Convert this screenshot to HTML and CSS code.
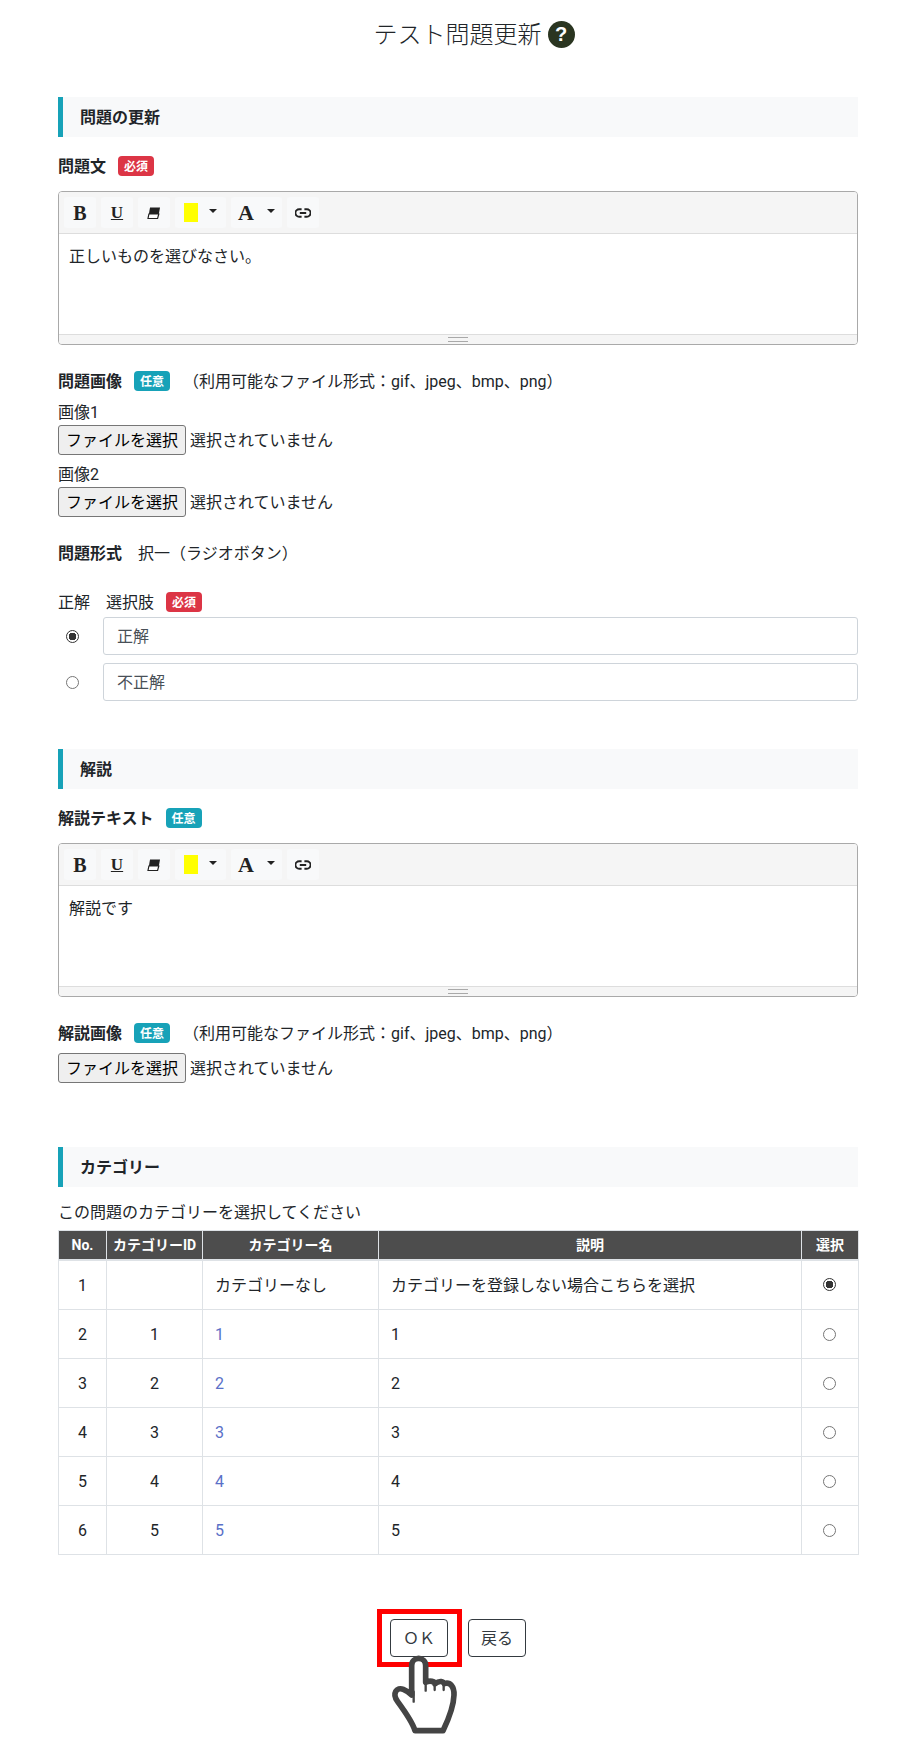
FILE: index.html
```html
<!DOCTYPE html>
<html lang="ja">
<head>
<meta charset="utf-8">
<title>テスト問題更新</title>
<link rel="stylesheet" href="styles.css">
</head>
<body>
<main class="page">
  <header class="title-row">
    <h1 class="title">テスト問題更新</h1>
    <span class="help">?</span>
  </header>

  <h2 class="section">問題の更新</h2>
  <div class="label-row after-section"><b class="label">問題文</b><span class="badge required">必須</span></div>
  <div class="editor">
    <div class="toolbar">
      <span class="tool serif">B</span>
      <span class="tool serif under">U</span>
      <span class="tool"><svg width="14" height="14" viewBox="0 0 14 14"><path d="M3 1.5H13L11.8 8H1.9Z" fill="#222"/><path d="M1.9 8H11.8L10.6 12.5H1Z" fill="#fff" stroke="#222" stroke-width="1.2"/></svg></span>
      <span class="tool wide"><i class="swatch"></i><i class="caret"></i></span>
      <span class="tool wide"><span class="serif big">A</span><i class="caret"></i></span>
      <span class="tool"><svg width="16" height="10" viewBox="0 0 16 10"><path d="M6.6 1.2H4.2a3.8 3.8 0 0 0 0 7.6h2.4M9.4 1.2h2.4a3.8 3.8 0 0 1 0 7.6H9.4M4.8 5h6.4" fill="none" stroke="#222" stroke-width="1.9"/></svg></span>
    </div>
    <div class="editable">正しいものを選びなさい。</div>
    <div class="status"><i class="grip"></i></div>
  </div>

  <div class="label-row after-editor"><b class="label">問題画像</b><span class="badge optional">任意</span><span class="note">（利用可能なファイル形式：gif、jpeg、bmp、png）</span></div>
  <div class="sub-label">画像1</div>
  <div class="file"><button class="file-btn" type="button">ファイルを選択</button><span>選択されていません</span></div>
  <div class="sub-label">画像2</div>
  <div class="file"><button class="file-btn" type="button">ファイルを選択</button><span>選択されていません</span></div>

  <div class="label-row after-editor"><b class="label">問題形式</b><span class="format">択一（ラジオボタン）</span></div>

  <div class="label-row choices-head"><span class="correct-head">正解</span><span>選択肢</span><span class="badge required">必須</span></div>
  <div class="choice first"><input class="radio" type="radio" name="q" checked><input class="text" type="text" value="正解"></div>
  <div class="choice"><input class="radio" type="radio" name="q"><input class="text" type="text" value="不正解"></div>

  <h2 class="section second">解説</h2>
  <div class="label-row after-section"><b class="label">解説テキスト</b><span class="badge optional">任意</span></div>
  <div class="editor">
    <div class="toolbar">
      <span class="tool serif">B</span>
      <span class="tool serif under">U</span>
      <span class="tool"><svg width="14" height="14" viewBox="0 0 14 14"><path d="M3 1.5H13L11.8 8H1.9Z" fill="#222"/><path d="M1.9 8H11.8L10.6 12.5H1Z" fill="#fff" stroke="#222" stroke-width="1.2"/></svg></span>
      <span class="tool wide"><i class="swatch"></i><i class="caret"></i></span>
      <span class="tool wide"><span class="serif big">A</span><i class="caret"></i></span>
      <span class="tool"><svg width="16" height="10" viewBox="0 0 16 10"><path d="M6.6 1.2H4.2a3.8 3.8 0 0 0 0 7.6h2.4M9.4 1.2h2.4a3.8 3.8 0 0 1 0 7.6H9.4M4.8 5h6.4" fill="none" stroke="#222" stroke-width="1.9"/></svg></span>
    </div>
    <div class="editable">解説です</div>
    <div class="status"><i class="grip"></i></div>
  </div>
  <div class="label-row after-editor"><b class="label">解説画像</b><span class="badge optional">任意</span><span class="note">（利用可能なファイル形式：gif、jpeg、bmp、png）</span></div>
  <div class="file after-note"><button class="file-btn" type="button">ファイルを選択</button><span>選択されていません</span></div>

  <h2 class="section third">カテゴリー</h2>
  <p class="lead">この問題のカテゴリーを選択してください</p>
  <table class="cats">
    <colgroup><col class="c1"><col class="c2"><col class="c3"><col class="c4"><col class="c5"></colgroup>
    <thead><tr><th>No.</th><th>カテゴリーID</th><th>カテゴリー名</th><th>説明</th><th>選択</th></tr></thead>
    <tbody>
      <tr><td class="mid">1</td><td class="mid"></td><td>カテゴリーなし</td><td>カテゴリーを登録しない場合こちらを選択</td><td class="pick"><input class="radio" type="radio" name="c" checked></td></tr>
      <tr><td class="mid">2</td><td class="mid">1</td><td><a href="#">1</a></td><td>1</td><td class="pick"><input class="radio" type="radio" name="c"></td></tr>
      <tr><td class="mid">3</td><td class="mid">2</td><td><a href="#">2</a></td><td>2</td><td class="pick"><input class="radio" type="radio" name="c"></td></tr>
      <tr><td class="mid">4</td><td class="mid">3</td><td><a href="#">3</a></td><td>3</td><td class="pick"><input class="radio" type="radio" name="c"></td></tr>
      <tr><td class="mid">5</td><td class="mid">4</td><td><a href="#">4</a></td><td>4</td><td class="pick"><input class="radio" type="radio" name="c"></td></tr>
      <tr><td class="mid">6</td><td class="mid">5</td><td><a href="#">5</a></td><td>5</td><td class="pick"><input class="radio" type="radio" name="c"></td></tr>
    </tbody>
  </table>

  <div class="actions">
    <div class="ok-wrap">
      <button class="btn ok" type="button">ＯＫ</button>
      <span class="highlight"></span>
      <svg class="hand" width="80" height="87" viewBox="0 0 240 261"><path d="M80 135V47C80 18 122 18 122 47V97C135 90 150 95 150 101C165 90 175 95 178 101C195 95 208 110 207 135C206 165 192 205 174 242H90C85 225 60 185 38 155C20 130 35 110 55 118C65 122 75 130 80 135Z" fill="#fff" stroke="#444" stroke-width="17" stroke-linejoin="round"/><path d="M86 125V155M122 97V122M149 103V120M176 103V120" fill="none" stroke="#444" stroke-width="7" stroke-linecap="round"/></svg>
    </div>
    <button class="btn" type="button">戻る</button>
  </div>
</main>
</body>
</html>
```

FILE: styles.css
```css
* { box-sizing: border-box; }
html, body { margin: 0; padding: 0; }
body {
  background: #fff;
  color: #212529;
  font-family: Roboto, "Noto Sans CJK JP", sans-serif;
  font-size: 16px;
  line-height: 24px;
}
.page { width: 800px; margin-left: 58px; padding-bottom: 80px; }

.title-row { display: flex; justify-content: center; align-items: center; gap: 6px; height: 97px; padding: 16px 0 45px 32px; }
.title { margin: 0; padding-top: 2px; font-size: 24px; font-weight: 300; line-height: 36px; }
.help { width: 27px; height: 27px; border-radius: 50%; background: #2a3520; color: #fff; font: bold 20px/27px "Liberation Sans", sans-serif; text-align: center; }

.section { margin: 0; height: 40px; padding-left: 17px; border-left: 5px solid #17a2b8; background: #f8f9fa; font-size: 16px; font-weight: 700; line-height: 42px; }
.section.second { margin-top: 48px; }
.section.third { margin-top: 64px; }

.label-row { display: flex; align-items: center; height: 24px; }
.label-row > :not(.badge) { padding-top: 2px; }
.label { font-weight: 700; font-size: 16px; }
.after-section { margin-top: 17px; }
.after-editor { margin-top: 24px; }
.badge { margin-left: 12px; width: 36px; height: 20px; padding-top: 1px; border-radius: 4px; color: #fff; font-size: 12px; font-weight: 700; line-height: 20px; text-align: center; }
.required { background: #dc3545; }
.optional { background: #17a2b8; }
.note { margin-left: 13px; }
.format { margin-left: 16px; }

.editor { margin-top: 13px; height: 154px; display: flex; flex-direction: column; border: 1px solid #a9a9a9; border-radius: 4px; overflow: hidden; }
.toolbar { display: flex; gap: 5px; height: 42px; padding: 5px; background: #f5f5f5; border-bottom: 1px solid #ddd; }
.tool { width: 32px; height: 31px; display: flex; align-items: center; justify-content: center; background: #f8f9fa; border-radius: 3px; color: #222; }
.tool.wide { width: 51px; justify-content: flex-start; padding-left: 9px; }
.serif { font-family: "Liberation Serif", serif; font-weight: 700; font-size: 20px; }
.under { text-decoration: underline; font-size: 17px; }
.big { font-size: 22px; width: 20px; margin-left: -2px; }
.swatch { display: block; width: 14px; height: 19px; background: #ff0; }
.caret { display: block; margin-left: 11px; width: 0; height: 0; margin-top: -3px; border: 4px solid transparent; border-top-color: #222; border-bottom: 0; }
.big + .caret { margin-left: 9px; }
.editable { flex: 1; padding: 11px 10px 9px; }
.status { height: 10px; display: flex; align-items: center; justify-content: center; background: #f5f5f5; border-top: 1px solid #ddd; }
.grip { display: block; width: 20px; height: 5px; border-top: 1px solid #a9a9a9; border-bottom: 1px solid #a9a9a9; }

.sub-label { margin-top: 7px; height: 24px; padding-top: 1px; }
.file { display: flex; align-items: center; gap: 4px; margin-top: 1px; height: 30px; }
.file > span { padding-top: 2px; }
.after-note { margin-top: 8px; }
.file-btn { height: 30px; width: 128px; padding: 2px 0 0; background: #efefef; border: 1px solid #767676; border-radius: 3px; color: #000; font: inherit; }

.choices-head { margin-top: 25px; }
.correct-head { width: 48px; }
.choice { display: flex; align-items: center; margin-top: 8px; height: 38px; }
.choice.first { margin-top: 3px; }
.choice .radio { margin: 0 24px 0 8px; flex: none; }
.text { width: 100%; height: 38px; padding: 0 13px 2px; border: 1px solid #ced4da; border-radius: 3px; color: #495057; font: inherit; }

.radio { appearance: none; display: block; width: 13px; height: 13px; margin: 0 auto; border: 1px solid #767676; border-radius: 50%; background: #fff; }
.radio:checked { border-color: #333; background: radial-gradient(circle, #333 0 3.6px, #fff 4px); }

.lead { margin: 14px 0 5px; }
.cats { width: 800px; table-layout: fixed; border-collapse: collapse; }
.c1 { width: 48px; } .c2 { width: 96px; } .c3 { width: 176px; } .c4 { width: 423px; } .c5 { width: 57px; }
.cats th { height: 29px; padding: 0; background: #4d4d4d; color: #fff; font-size: 14px; font-weight: 700; line-height: 20px; text-align: center; border: 1px solid #dee2e6; border-bottom-width: 2px; }
.cats td { height: 49px; padding: 2px 12px 0; border: 1px solid #dee2e6; }
.cats tbody tr:first-child td { height: 50px; }
.cats td.mid { padding: 2px 0 0; text-align: center; }
.cats td.pick { padding: 0 2px 0 0; }
.cats a { color: #5a70c8; text-decoration: none; }

.actions { display: flex; justify-content: center; gap: 20px; margin-top: 64px; }
.ok-wrap { position: relative; width: 58px; }
.btn { width: 58px; height: 38px; padding: 2px 0 0; background: #fff; border: 1px solid #343a40; border-radius: 4px; color: #343a40; font: inherit; }
.highlight { position: absolute; left: -13px; top: -10px; width: 85px; height: 58px; border: 5px solid #f00; }
.hand { position: absolute; left: -5px; top: 31px; }
```
